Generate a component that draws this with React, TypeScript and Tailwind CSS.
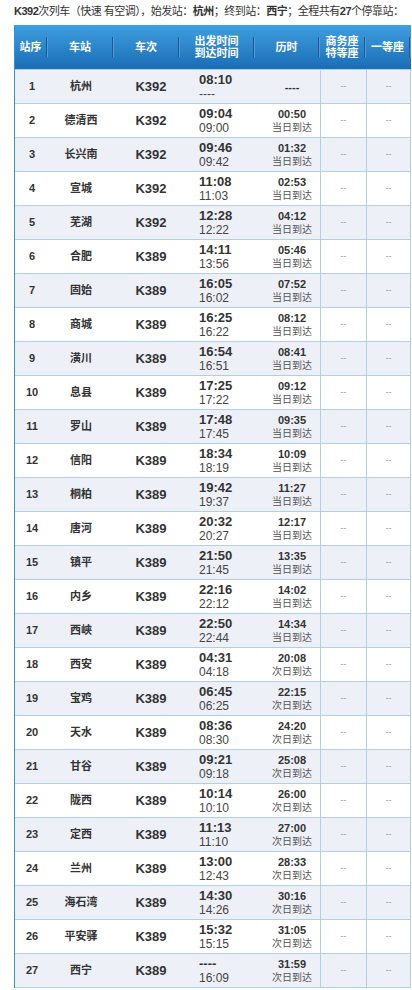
import React from 'react';

type Stop = [number, string, string, string, string, string, string];

// 站序, 车站, 车次, 出发, 到达, 历时, 到达说明
const stops: Stop[] = [
  [1, '杭州', 'K392', '08:10', '----', '----', ''],
  [2, '德清西', 'K392', '09:04', '09:00', '00:50', '当日到达'],
  [3, '长兴南', 'K392', '09:46', '09:42', '01:32', '当日到达'],
  [4, '宣城', 'K392', '11:08', '11:03', '02:53', '当日到达'],
  [5, '芜湖', 'K392', '12:28', '12:22', '04:12', '当日到达'],
  [6, '合肥', 'K389', '14:11', '13:56', '05:46', '当日到达'],
  [7, '固始', 'K389', '16:05', '16:02', '07:52', '当日到达'],
  [8, '商城', 'K389', '16:25', '16:22', '08:12', '当日到达'],
  [9, '潢川', 'K389', '16:54', '16:51', '08:41', '当日到达'],
  [10, '息县', 'K389', '17:25', '17:22', '09:12', '当日到达'],
  [11, '罗山', 'K389', '17:48', '17:45', '09:35', '当日到达'],
  [12, '信阳', 'K389', '18:34', '18:19', '10:09', '当日到达'],
  [13, '桐柏', 'K389', '19:42', '19:37', '11:27', '当日到达'],
  [14, '唐河', 'K389', '20:32', '20:27', '12:17', '当日到达'],
  [15, '镇平', 'K389', '21:50', '21:45', '13:35', '当日到达'],
  [16, '内乡', 'K389', '22:16', '22:12', '14:02', '当日到达'],
  [17, '西峡', 'K389', '22:50', '22:44', '14:34', '当日到达'],
  [18, '西安', 'K389', '04:31', '04:18', '20:08', '次日到达'],
  [19, '宝鸡', 'K389', '06:45', '06:25', '22:15', '次日到达'],
  [20, '天水', 'K389', '08:36', '08:30', '24:20', '次日到达'],
  [21, '甘谷', 'K389', '09:21', '09:18', '25:08', '次日到达'],
  [22, '陇西', 'K389', '10:14', '10:10', '26:00', '次日到达'],
  [23, '定西', 'K389', '11:13', '11:10', '27:00', '次日到达'],
  [24, '兰州', 'K389', '13:00', '12:43', '28:33', '次日到达'],
  [25, '海石湾', 'K389', '14:30', '14:26', '30:16', '次日到达'],
  [26, '平安驿', 'K389', '15:32', '15:15', '31:05', '次日到达'],
  [27, '西宁', 'K389', '----', '16:09', '31:59', '次日到达'],
];

const cols = 'grid grid-cols-[33px_66px_66px_75px_65px_46px_45px]';

const HeadCell = ({ children }: { children: React.ReactNode }) => (
  <div className="flex items-center justify-center h-[44px]">
    <div className="flex-1 text-center leading-[12px]">{children}</div>
    <div className="w-[2px] h-[20px] border-l border-[#27518f] border-r border-r-[#4aa0dc]" />
  </div>
);

const App = () => {
  return (
    <div
      className="w-[412px] min-h-[990px] bg-white overflow-hidden text-[#333]"
      style={{ fontFamily: '"Liberation Sans", "Noto Sans CJK SC", sans-serif' }}
    >
      {/* 标题 */}
      <div className="pl-[14px] pt-[4px] h-[25px] text-[11px] leading-[14px] whitespace-nowrap tracking-[-0.5px]">
        <b>K392</b>次列车（快速 有空调），始发站：<b>杭州</b>；终到站：<b>西宁</b>；全程共有<b>27</b>个停靠站：
      </div>

      <div className="ml-[14px] w-[397px] border-l border-[#3b8fd6]">
        {/* 表头 */}
        <div className={`${cols} bg-gradient-to-b from-[#3f9fe0] to-[#1a6db5] text-white font-bold text-[11px]`}>
          <HeadCell>站序</HeadCell>
          <HeadCell>车站</HeadCell>
          <HeadCell>车次</HeadCell>
          <HeadCell>
            出发时间
            <br />
            到达时间
          </HeadCell>
          <HeadCell>历时</HeadCell>
          <HeadCell>
            商务座
            <br />
            特等座
          </HeadCell>
          <HeadCell>一等座</HeadCell>
        </div>

        {/* 表体 */}
        {stops.map(([no, name, train, dep, arr, dur, note]) => (
          <div
            key={no}
            className={`${cols} h-[34px] border-t border-[#b3cfe3] ${no % 2 === 1 ? 'bg-[#eef0f8]' : 'bg-white'}`}
          >
            <div className="flex items-center justify-center text-[11px] font-bold pl-[1px]">{no}</div>
            <div className="flex items-center justify-center text-[11px] font-bold">{name}</div>
            <div className="flex items-center justify-center text-[13px] font-bold pl-[8px]">{train}</div>
            <div className="flex flex-col justify-center pl-[19px]">
              <span className="text-[13px] font-bold leading-[14px]">{dep}</span>
              <span className="text-[12px] leading-[14px] text-[#444]">{arr}</span>
            </div>
            <div className="flex flex-col items-center justify-center pl-[9px]">
              <span className="text-[11px] font-bold leading-[14px]">{dur}</span>
              {note && <span className="text-[10px] leading-[14px] text-[#555]">{note}</span>}
            </div>
            <div className="flex items-center justify-center border-l border-[#b3cfe3] text-[9px] text-[#999]">--</div>
            <div className="flex items-center justify-center border-x border-[#b3cfe3] text-[9px] text-[#999]">--</div>
          </div>
        ))}
        <div className="border-t border-[#b3cfe3]" />
      </div>
    </div>
  );
};

export default App;
